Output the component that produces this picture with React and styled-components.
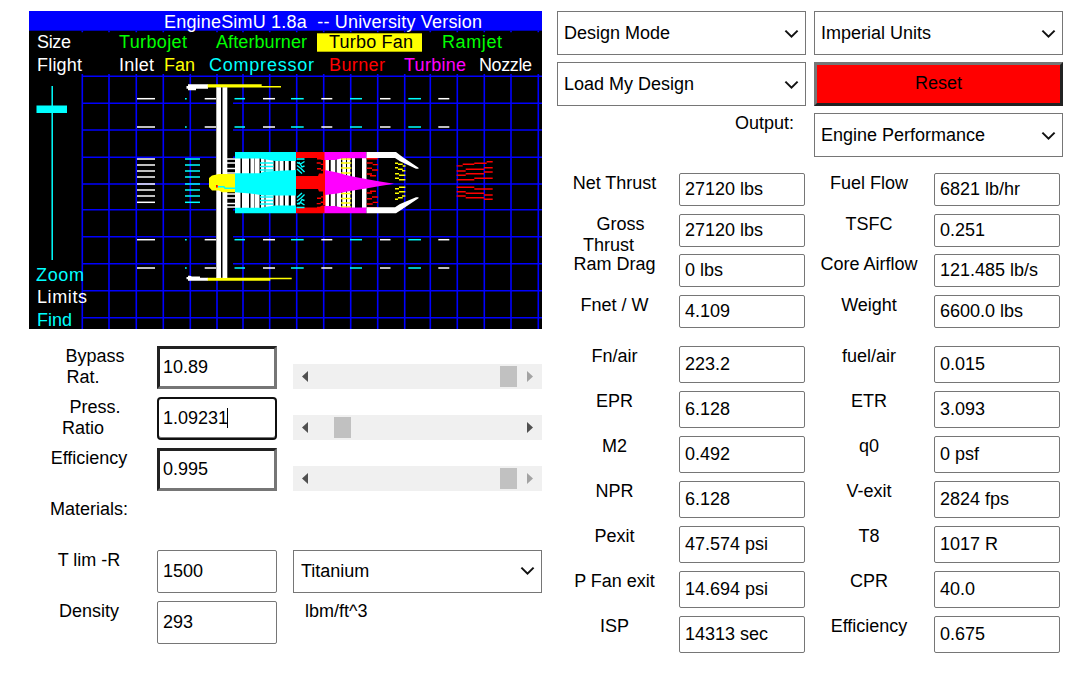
import React from "react";
import styled, { createGlobalStyle, css } from "styled-components";

const GlobalStyle = createGlobalStyle`
  * { box-sizing: border-box; }
  body {
    margin: 0;
    background: #fff;
    color: #000;
    font-family: "Liberation Sans", Arial, sans-serif;
    font-size: 18px;
    line-height: 21px;
  }
`;

const Page = styled.main`
  display: flex;
  gap: 15px;
  padding: 11px 24px 25px 29px;
  width: 1087px;
  height: 678px;
  overflow: hidden;
`;

const InputSide = styled.section`
  width: 513px;
  flex: none;
`;

const OutputSide = styled.section`
  width: 506px;
  flex: none;
`;

const EngineView = styled.svg`
  display: block;
  background: #000;
  font-family: "Liberation Sans", Arial, sans-serif;
  font-size: 18px;
`;

const InputGrid = styled.div`
  display: grid;
  grid-template-columns: 128px 136px 249px;
  grid-auto-rows: 51px;
  padding-top: 17px;
`;

const Label = styled.div`
  padding-right: ${(p) => p.$inset || 0}px;
  text-align: ${(p) => p.$align || "center"};
  white-space: nowrap;
`;

const Line = styled.div`
  padding-left: ${(p) => (p.$shift > 0 ? p.$shift * 2 : 0)}px;
  padding-right: ${(p) => (p.$shift < 0 ? -p.$shift * 2 : 0)}px;
`;

const Field = styled.div`
  display: flex;
  align-items: center;
  width: ${(p) => p.$width || 126}px;
  height: ${(p) => p.$height || 43}px;
  padding: 0 5px 1px;
  border: 1px solid #767676;
  border-radius: 2px;
  white-space: nowrap;
  ${(p) =>
    p.$inset &&
    css`
      padding: 0 3px 1px;
      border: 3px solid;
      border-color: #222 #767676 #767676 #222;
      border-radius: 0;
    `}
  ${(p) =>
    p.$focused &&
    css`
      border: 2px solid #101010;
      padding: 0 4px 1px;
      border-radius: 4px;
      box-shadow: inset 0 -1px 0 #767676;
    `}
`;

const Caret = styled.span`
  width: 1px;
  height: 20px;
  margin-left: -1px;
  background: #000;
`;

const SelectBox = styled.div`
  display: flex;
  align-items: center;
  justify-content: space-between;
  height: ${(p) => p.$height || 44}px;
  width: 249px;
  padding: ${(p) => (p.$height ? "0 6px 1px 7px" : "1px 6px 0")};
  border: 1px solid #767676;
  white-space: nowrap;
`;

const ResetButton = styled.div`
  height: 44px;
  padding-top: 8px;
  border: 3px solid;
  border-color: #767676 #222 #222 #767676;
  background: #f00;
  text-align: center;
`;

const Track = styled.div`
  display: flex;
  align-items: center;
  height: 25px;
  margin-top: 18px;
  padding: 0 9px;
  background: #f0f0f0;
`;

const Thumb = styled.div`
  width: 17px;
  height: 21px;
  margin-left: ${(p) => p.$offset}px;
  margin-right: auto;
  background: #c1c1c1;
`;

const Unit = styled.div`
  padding-left: 12px;
`;

const Controls = styled.div`
  display: grid;
  grid-template-columns: 249px 249px;
  column-gap: 8px;
  grid-auto-rows: 51px;
`;

const Results = styled.div`
  display: grid;
  grid-template-columns: 115px 7px 126px 9px 110px 10px 126px;
  grid-template-rows: 41px 40px 41px 51px repeat(7, 45px);
  padding-top: 9px;
  & > :nth-child(4n + 1) { grid-column: 1; }
  & > :nth-child(4n + 2) { grid-column: 3; }
  & > :nth-child(4n + 3) { grid-column: 5; }
  & > :nth-child(4n) { grid-column: 7; }
`;

const Select = ({ children, height }) => (
  <SelectBox $height={height}>
    {children}
    <svg width="15" height="10" viewBox="0 0 15 10">
      <path d="M1.4 1.6 L7.5 7.6 L13.6 1.6" fill="none" stroke="#111" strokeWidth="2" />
    </svg>
  </SelectBox>
);

const Scrollbar = ({ offset, atEnd }) => (
  <Track>
    <svg width="6" height="11"><path d="M6 0V11L0 5.5Z" fill="#505050" /></svg>
    <Thumb $offset={offset} />
    <svg width="6" height="11"><path d="M0 0V11L6 5.5Z" fill={atEnd ? "#a3a3a3" : "#505050"} /></svg>
  </Track>
);

const gridX = [82.3, 109, 136.3, 163.3, 190.3, 217, 243, 269.7, 296.7, 323.7, 350.7, 377.7, 404.7, 430.3, 457.3, 484.3, 511, 538.3];
const gridY = [76.3, 103.3, 130, 157.3, 184, 209.7, 236.7, 263.7, 290.7, 317.7];
const bypassY = [98.7, 127, 239.7, 268];
const coreY = [159, 165, 171, 177, 184, 190, 196, 202.3];
const bypassDashes = [
  [137, 155, "#fff"], [185, 186.7, "#0ff"], [204.7, 217, "#fff"], [234.5, 245, "#0ff"],
  [263, 275, "#fff"], [291, 303.7, "#0ff"], [321.3, 332.3, "#fff"], [350, 362, "#0ff"],
  [380, 390.5, "#fff"], [408.3, 421, "#0ff"], [438.3, 449.3, "#fff"],
];
const menu = [
  ["EngineSimU 1.8a  -- University Version", 164, 28.4, 318, "#fff"],
  ["Size", 37, 48.3, 34, "#fff"], ["Turbojet", 119, 48.3, 68, "#0f0"],
  ["Afterburner", 216, 48.3, 91, "#0f0"], ["Turbo Fan", 329, 48.3, 84, "#000"],
  ["Ramjet", 442, 48.3, 60, "#0f0"], ["Flight", 37, 70.6, 45, "#fff"],
  ["Inlet", 119, 70.6, 35, "#fff"], ["Fan", 164, 70.6, 31, "#ff0"],
  ["Compressor", 209, 70.6, 105, "#0ff"], ["Burner", 329, 70.6, 56, "#f00"],
  ["Turbine", 404, 70.6, 62, "#f0f"], ["Nozzle", 479, 70.6, 53, "#fff"],
  ["Zoom", 36, 281, 48, "#0ff"], ["Limits", 37, 303.4, 50, "#fff"], ["Find", 37, 326, 35, "#0ff"],
];
const compressorBars = [[235, 240.5], [242, 249], [250.5, 254.5], [255, 259.5], [261, 264.5], [265.5, 273.5], [275.3, 278.5], [279.5, 283.5], [285, 288.7], [291, 295.5]];
const turbineBars = [[325, 329], [330.7, 335.3], [336.7, 341], [342.3, 346], [347, 350.3], [352, 355], [362, 366.5]];

const yellowStreaks = `
  M395 163.3h3m0 1h4.7m0 1.7h2.8 M395 163.3h3 M398 164.3h4.7 M402.7 166h2.8
  M395 167.7h3 M398 169.3h4.7 M402 170.7h3.3
  M395 173.7h4 M399 175.3h6.3 M395 178.3h4 M399 179.7h6.3
  M395 188.7h4 M399 187.3h6.3 M395 193.3h4 M399 191.7h6.3
  M395 199.3h3 M398 197.7h4.7 M402 196h3.3`;
const exhaustStreaks = `
  M456.7 165.9h6m0 -1.6h11.6m0 -1h12.4m0 -1.6h6
  M456.7 171h9m0 -1.7h18.3m0 -1.6h8.7
  M456.7 175.3h9m0 -1.6h18.3m0 -1.7h8.7
  M456.7 179.7h17.6m0 -1.4h18.4
  M456.7 187.3h17.6m0 1.7h18.4
  M456.7 191.7h9m0 1.6h18.3m0 1.7h8.7
  M456.7 196h9m0 1.7h18.3m0 1.6h8.7`;
const turbineStreaks = `
  M366.7 158.7h11 M366.7 163h6m0 1.6h5.3 M366.7 168.3h5.3m0 1.7h6 M366.7 174h5.3m-2 1.7h6
  M366.7 193h5.3m-2 -1.7h6 M366.7 198.7h5.3m0 -1.7h6 M366.7 204h6m0 -1.6h5.3 M366.7 207.7h11`;
const burnerStreaks = `
  M317 158.7h7 M316.7 163h4m0 1.4h4 M317 168.7h4m0 1.4h4
  M317 198.3h4m0 -1.4h4 M316.7 203.6h4m0 -1.4h4 M317 207.5h7`;
const swirl = `
  M296.5 159h8 M297 162.5l3.5 1.5l4 -2.5 M297 165.5l4 3l3.5 3.5 M299 162l3 5l2.5 -1 M297 169l5 4.5
  M296.5 207.5h8 M297 204l3.5 -1.5l4 2.5 M297 201l4 -3l3.5 -3.5 M299 204.5l3 -5l2.5 1 M297 197.5l5 -4.5`;

const Hatch = ({ ys, x1, x2, color }) =>
  ys.map((y) => <path key={y} d={`M${x1} ${y}H${x2}`} stroke={color} strokeWidth="1.5" />);

const Engine = () => (
  <EngineView width="513" height="318" viewBox="29 11 513 318">
    <rect x="29" y="11" width="513" height="19.7" fill="#00f" />
    <g stroke="#00f" strokeWidth="1.6">
      {gridX.map((x) => <path key={x} d={`M${x} 30.7v1.5M${x} 74V329`} />)}
      {gridY.map((y) => <path key={y} d={`M82 ${y}H542`} />)}
    </g>
    <rect x="317" y="33.3" width="105" height="18.4" fill="#ff0" />
    {menu.map(([text, x, y, w, fill]) => (
      <text key={text} x={x} y={y} textLength={w} fill={fill} xmlSpace="preserve">{text}</text>
    ))}
    <path d="M52.2 86V260" stroke="#0ff" strokeWidth="1.5" />
    <rect x="36.5" y="105.5" width="30.5" height="7.5" fill="#0ff" />
    {bypassDashes.map(([a, b, c]) => <Hatch key={a} ys={bypassY} x1={a} x2={b} color={c} />)}
    <Hatch ys={coreY} x1={137} x2={155} color="#fff" />
    <Hatch ys={coreY} x1={185} x2={200} color="#0ff" />
    <rect x="216" y="88" width="17" height="189" fill="#000" />
    <path d="M188 84.3H208V88.7H196V90.3H188V88.7H186.5V86H188ZM188 275.7H190L192 276.5H200V277.7H208V280.8H188V279.3H186.5V277H188Z" fill="#fff" />
    <path d="M207.7 84.3H261.7V86H281V87.4H207.7ZM207.7 277.7H291.7V279.2H270.3V280.8H207.7Z" fill="#ff0" />
    <path d="M216.3 87.3H221V278H216.3ZM222.5 87.3H227.3V278H222.5Z" fill="#fff" />
    <Hatch ys={[159, 163, 168.5, 173, 194, 198, 203.5, 207]} x1={227} x2={235} color="#fff" />
    <path d="M235 158H366V208H235Z" fill="#000" />
    {[...compressorBars, ...turbineBars].map(([a, b]) => (
      <rect key={a} x={a} y="158" width={b - a} height="50" fill="#fff" />
    ))}
    <Hatch ys={[163, 166.5, 170, 197, 200.5, 204]} x1={260} x2={273.5} color="#0ff" />
    <Hatch ys={[159, 163, 168, 173, 193.5, 198.5, 203, 207]} x1={341} x2={351.3} color="#ff0" />
    <path d="M235 152H296V161H275L260 158.5H235ZM235 213.3H296V205.5H275L260 207.7H235ZM235 173.3H260L264 171.5L296 170V195.5H264L250 193.5L235 192.3Z" fill="#0ff" />
    <path d="M209 178L212 175.5L219 174H235V192.3H222L219 190.5H212L209 187Z" fill="#ff0" />
    <path d="M218 186.8H224L225 188.3H235" stroke="#0ff" strokeWidth="1.4" fill="none" />
    <rect x="216" y="185" width="1.7" height="2.6" fill="#f00" />
    <path d="M296 152H325V160H322L319 158H296ZM296 213.3H325V205.5H322L319 207.5H296ZM296 176H318L319 173.5H323V160H325.5V206H323V191.5H319L318 189H296Z" fill="#f00" />
    <path d="M324.5 152H366.5V158.3H342L335 160H324.5ZM324.5 213.3H366.5V207.5H342L335 206H324.5ZM325 170L337 172.5L350 176L366 179L380 181.5L394 183.7L380 186L366 188.5L350 191L337 193.5L325 195Z" fill="#f0f" />
    <g fill="none" strokeWidth="1.4">
      <path d={swirl} stroke="#0ff" />
      <path d={`${burnerStreaks}${turbineStreaks}${exhaustStreaks}`} stroke="#f00" />
      <path d={yellowStreaks} stroke="#ff0" />
    </g>
    <path d="M366.5 152H396L402.5 157L418.5 167.7V168.7H416L400 161.3L395 158H366.5ZM366.5 213.3H396L402.5 209L418.5 198.3V197.3H416L400 204L395 207.3H366.5Z" fill="#fff" />
  </EngineView>
);

const results = [
  ["Net Thrust", "27120 lbs", "Fuel Flow", "6821 lb/hr"],
  ["Gross Thrust", "27120 lbs", "TSFC", "0.251"],
  ["Ram Drag", "0 lbs", "Core Airflow", "121.485 lb/s"],
  ["Fnet / W", "4.109", "Weight", "6600.0 lbs"],
  ["Fn/air", "223.2", "fuel/air", "0.015"],
  ["EPR", "6.128", "ETR", "3.093"],
  ["M2", "0.492", "q0", "0 psf"],
  ["NPR", "6.128", "V-exit", "2824 fps"],
  ["Pexit", "47.574 psi", "T8", "1017 R"],
  ["P Fan exit", "14.694 psi", "CPR", "40.0"],
  ["ISP", "14313 sec", "Efficiency", "0.675"],
];

export default function App() {
  return (
    <>
      <GlobalStyle />
      <Page>
        <InputSide>
          <Engine />
          <InputGrid>
            <Label $inset={8}><Line $shift={6}>Bypass</Line><Line $shift={-6}>Rat.</Line></Label>
            <Field $width={120} $inset>10.89</Field>
            <Scrollbar offset={192} atEnd />
            <Label $inset={8}><Line $shift={6}>Press.</Line><Line $shift={-6}>Ratio</Line></Label>
            <Field $width={120} $inset $focused>1.09231<Caret /></Field>
            <Scrollbar offset={26} />
            <Label $inset={8}>Efficiency</Label>
            <Field $width={120} $inset>0.995</Field>
            <Scrollbar offset={192} atEnd />
            <Label $inset={8}>Materials:</Label>
            <div />
            <div />
            <Label $inset={8}>T lim -R</Label>
            <Field $width={120}>1500</Field>
            <Select height={43}>Titanium</Select>
            <Label $inset={8}>Density</Label>
            <Field $width={120}>293</Field>
            <Unit>lbm/ft^3</Unit>
          </InputGrid>
        </InputSide>
        <OutputSide>
          <Controls>
            <Select>Design Mode</Select>
            <Select>Imperial Units</Select>
            <Select>Load My Design</Select>
            <ResetButton>Reset</ResetButton>
            <Label $align="right" $inset={12}>Output:</Label>
            <Select>Engine Performance</Select>
          </Controls>
          <Results>
            {results.map(([a, av, b, bv], i) => {
              const h = i < 4 ? 33 : 37;
              return (
                <React.Fragment key={a}>
                  <Label>
                    {a === "Gross Thrust" ? (
                      <><Line $shift={6}>Gross</Line><Line $shift={-6}>Thrust</Line></>
                    ) : a}
                  </Label>
                  <Field $height={h}>{av}</Field>
                  <Label>{b}</Label>
                  <Field $height={h}>{bv}</Field>
                </React.Fragment>
              );
            })}
          </Results>
        </OutputSide>
      </Page>
    </>
  );
}
